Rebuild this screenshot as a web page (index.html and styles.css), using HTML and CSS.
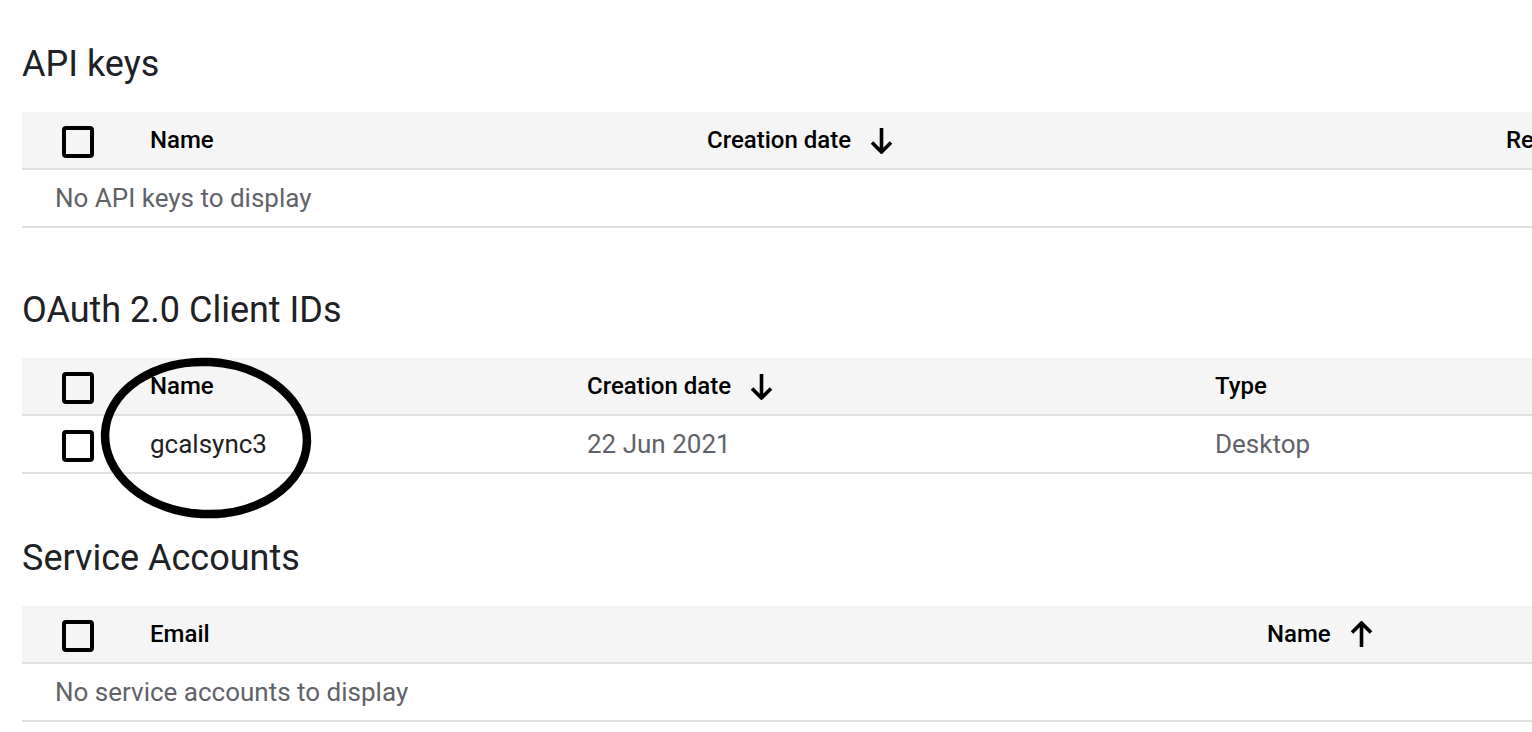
FILE: index.html
```html
<!DOCTYPE html>
<html lang="en">
<head>
<meta charset="utf-8">
<title>Credentials</title>
<link rel="stylesheet" href="styles.css">
</head>
<body>
<div class="page">
  <section class="section first">
    <h2 class="title">API keys</h2>
    <div class="table t-api">
      <div class="row head">
        <div class="cell cb"><span class="box"></span></div>
        <div class="cell">Name</div>
        <div class="cell">Creation date <svg class="arrow" viewBox="0 0 23 27"><path d="M11.5 1V25M2 15.5L11.5 25L21 15.5"/></svg></div>
        <div class="cell">Restrictions</div>
      </div>
      <div class="row empty"><div class="msg">No API keys to display</div></div>
    </div>
  </section>

  <section class="section">
    <h2 class="title">OAuth 2.0 Client IDs</h2>
    <div class="table t-oauth">
      <div class="row head">
        <div class="cell cb"><span class="box"></span></div>
        <div class="cell">Name</div>
        <div class="cell">Creation date <svg class="arrow" viewBox="0 0 23 27"><path d="M11.5 1V25M2 15.5L11.5 25L21 15.5"/></svg></div>
        <div class="cell">Type</div>
      </div>
      <div class="row data">
        <div class="cell cb"><span class="box"></span></div>
        <div class="cell name">gcalsync3</div>
        <div class="cell">22 Jun 2021</div>
        <div class="cell">Desktop</div>
      </div>
    </div>
  </section>

  <section class="section last">
    <h2 class="title">Service Accounts</h2>
    <div class="table t-sa">
      <div class="row head">
        <div class="cell cb"><span class="box"></span></div>
        <div class="cell">Email</div>
        <div class="cell">Name <svg class="arrow" viewBox="0 0 23 27"><path d="M11.5 26V2M2 11.5L11.5 2L21 11.5"/></svg></div>
      </div>
      <div class="row empty"><div class="msg">No service accounts to display</div></div>
    </div>
  </section>

  <svg class="annot" viewBox="0 0 224 174" width="224" height="174">
    <ellipse cx="112" cy="86" rx="101" ry="76" transform="rotate(3 112 86)"/>
  </svg>
</div>
</body>
</html>
```

FILE: styles.css
```css
html, body {
  margin: 0;
  padding: 0;
  background: #ffffff;
  overflow: hidden;
}

body {
  font-family: Roboto, "Liberation Sans", Arial, sans-serif;
  color: #202124;
}

.page {
  position: relative;
  width: 1800px;
  padding: 40px 0 0 22px;
}

.section {
  display: flex;
  flex-direction: column;
  margin-top: 58px;
}

.section.first {
  margin-top: 0;
}

.section.last {
  margin-top: 60px;
}

.title {
  margin: 0 0 24px 0;
  font-size: 36px;
  line-height: 48px;
  font-weight: 400;
  color: #202124;
}

.table {
  width: 1760px;
  display: flex;
  flex-direction: column;
}

.row {
  display: grid;
  height: 56px;
  align-items: center;
  border-bottom: 2px solid #e0e0e0;
  padding-left: 40px;
}

.row.head {
  background: #f5f5f5;
  font-size: 24px;
  font-weight: 500;
  color: #000000;
}

.row.data {
  font-size: 26px;
  color: #5f6368;
}

.row.data .name {
  color: #202124;
}

.t-api .row { grid-template-columns: 88px 557px 799px 1fr; }
.t-oauth .row { grid-template-columns: 88px 437px 628px 1fr; }
.t-sa .row { grid-template-columns: 88px 1117px 1fr; }

.row.empty {
  display: flex;
  padding-left: 33px;
  font-size: 26px;
  color: #5f6368;
}

.cell {
  display: flex;
  align-items: center;
  white-space: nowrap;
}

.cell.cb {
  padding-top: 4px;
}

.box {
  display: block;
  width: 32px;
  height: 32px;
  box-sizing: border-box;
  border: 4px solid #000000;
  border-radius: 4px;
}

.arrow {
  width: 23px;
  height: 27px;
  margin-left: 19px;
  fill: none;
  stroke: #000000;
  stroke-width: 3.6;
}

.annot {
  position: absolute;
  left: 94px;
  top: 352px;
  fill: none;
  stroke: #000000;
  stroke-width: 8.5;
}
```
